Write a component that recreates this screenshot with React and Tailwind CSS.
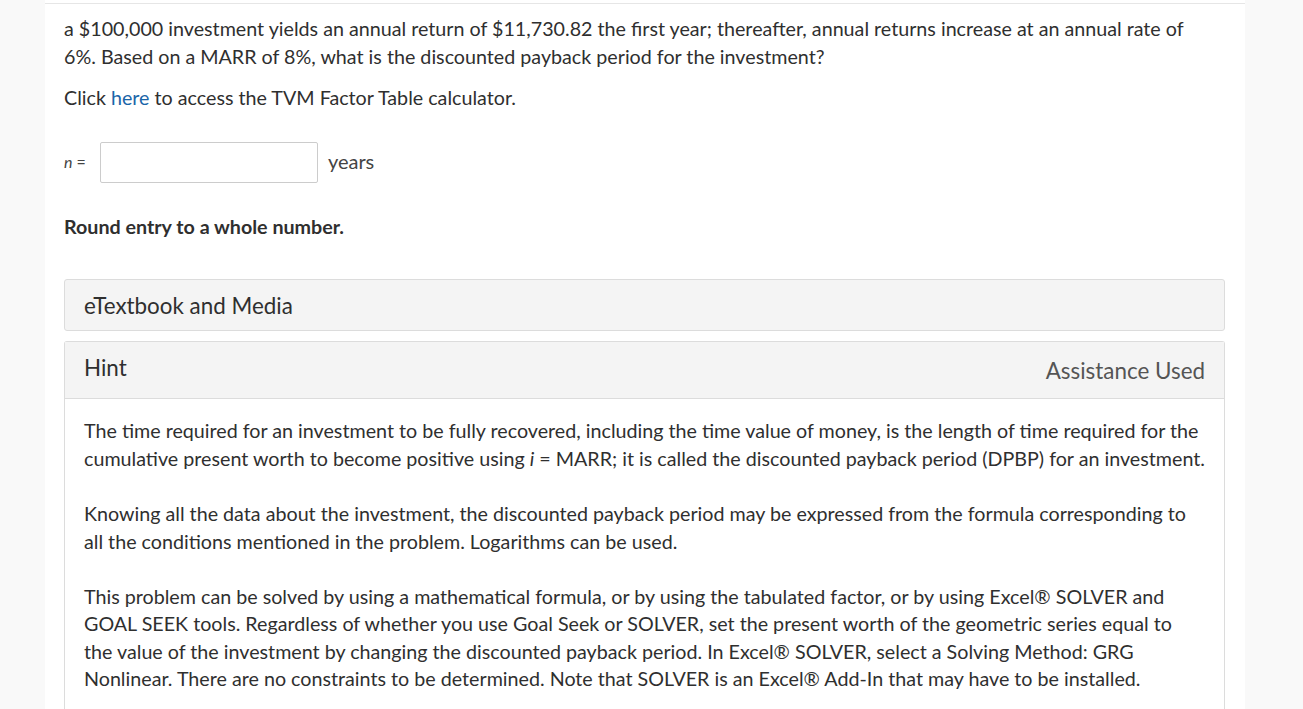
import React from 'react';

const Paragraph = ({ children, className = '' }) => (
  <p className={`text-[19.7px] leading-[27.6px] whitespace-nowrap ${className}`}>{children}</p>
);

export default function App() {
  return (
    <div className="min-h-[709px] bg-[#f9f9f9] font-['Lato',sans-serif] text-[#2f2f2f]">
      <div className="ml-[45px] w-[1200px] min-h-[709px] bg-white pt-[3px]">
        <div className="border-t border-[#e6e6e6] pl-[19px] pr-[20px] pt-[11px]">
          <Paragraph>
            a $100,000 investment yields an annual return of $11,730.82 the first year; thereafter, annual returns increase at an annual rate of
            <br />
            6%. Based on a MARR of 8%, what is the discounted payback period for the investment?
          </Paragraph>
          <Paragraph className="mt-[14px]">
            Click <a className="text-[#1a65a8]">here</a> to access the TVM Factor Table calculator.
          </Paragraph>

          <div className="mt-[30px] flex items-center">
            <span className="text-[16px] text-[#444]">
              <i>n</i> =
            </span>
            <input
              type="text"
              className="ml-[14px] h-[41px] w-[218px] rounded-[2px] border border-[#ccc] bg-white outline-none"
            />
            <span className="ml-[10px] -mt-[3px] text-[20px] text-[#444]">years</span>
          </div>

          <Paragraph className="mt-[30px] font-bold">Round entry to a whole number.</Paragraph>

          <div className="mt-[39px] flex h-[52px] items-center rounded-[3px] border border-[#dcdcdc] bg-[#f4f4f4] px-[19px] text-[22.4px]">
            eTextbook and Media
          </div>

          <div className="mt-[10px] rounded-t-[3px] border border-b-0 border-[#dcdcdc]">
            <div className="flex h-[57px] items-center justify-between border-b border-[#dcdcdc] bg-[#f4f4f4] px-[19px] text-[22.4px]">
              <span className="-mt-[6px]">Hint</span>
              <span className="text-[#555]">Assistance Used</span>
            </div>
            <div className="px-[19px] pt-[18px] pb-[20px]">
              <Paragraph>
                The time required for an investment to be fully recovered, including the time value of money, is the length of time required for the
                <br />
                cumulative present worth to become positive using <i>i</i> = MARR; it is called the discounted payback period (DPBP) for an investment.
              </Paragraph>
              <Paragraph className="mt-[27.4px]">
                Knowing all the data about the investment, the discounted payback period may be expressed from the formula corresponding to
                <br />
                all the conditions mentioned in the problem. Logarithms can be used.
              </Paragraph>
              <Paragraph className="mt-[27.4px]">
                This problem can be solved by using a mathematical formula, or by using the tabulated factor, or by using Excel® SOLVER and
                <br />
                GOAL SEEK tools. Regardless of whether you use Goal Seek or SOLVER, set the present worth of the geometric series equal to
                <br />
                the value of the investment by changing the discounted payback period. In Excel® SOLVER, select a Solving Method: GRG
                <br />
                Nonlinear. There are no constraints to be determined. Note that SOLVER is an Excel® Add-In that may have to be installed.
              </Paragraph>
            </div>
          </div>
        </div>
      </div>
    </div>
  );
}
